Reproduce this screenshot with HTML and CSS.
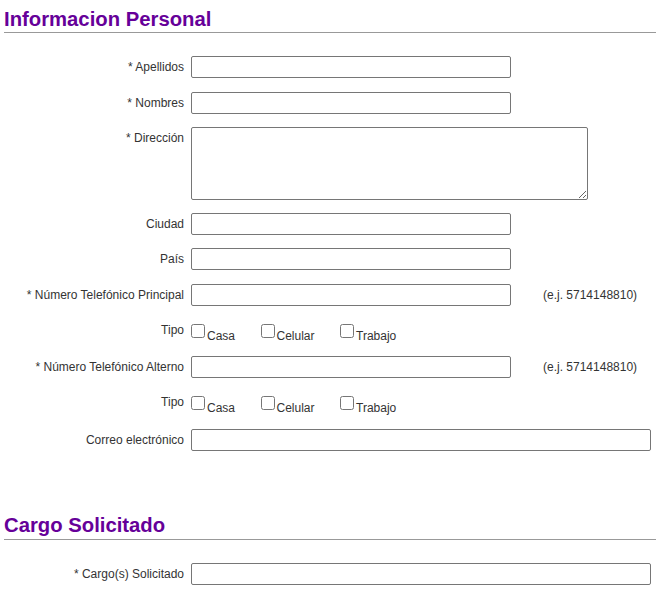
FILE: index.html
```html
<!DOCTYPE html>
<html lang="es">
<head>
<meta charset="utf-8">
<title>Informacion Personal</title>
<link rel="stylesheet" href="styles.css">
</head>
<body>
<div class="page">
  <h2 class="section-title">Informacion Personal</h2>
  <div class="form">
    <div class="row gap-plus">
      <label class="label">* Apellidos</label>
      <input class="field" type="text">
    </div>
    <div class="row">
      <label class="label">* Nombres</label>
      <input class="field" type="text">
    </div>
    <div class="row">
      <label class="label">* Dirección</label>
      <textarea class="area"></textarea>
    </div>
    <div class="row">
      <label class="label">Ciudad</label>
      <input class="field" type="text">
    </div>
    <div class="row gap-plus">
      <label class="label">País</label>
      <input class="field" type="text">
    </div>
    <div class="row">
      <label class="label">* Número Telefónico Principal</label>
      <input class="field" type="text">
      <span class="hint">(e.j. 5714148810)</span>
    </div>
    <div class="row type-row">
      <label class="label">Tipo</label>
      <div class="checks"><input class="check" type="checkbox"><span class="opt">Casa</span><input class="check" type="checkbox"><span class="opt">Celular</span><input class="check" type="checkbox"><span class="opt">Trabajo</span></div>
    </div>
    <div class="row">
      <label class="label">* Número Telefónico Alterno</label>
      <input class="field" type="text">
      <span class="hint">(e.j. 5714148810)</span>
    </div>
    <div class="row type-row tall">
      <label class="label">Tipo</label>
      <div class="checks"><input class="check" type="checkbox"><span class="opt">Casa</span><input class="check" type="checkbox"><span class="opt">Celular</span><input class="check" type="checkbox"><span class="opt">Trabajo</span></div>
    </div>
    <div class="row">
      <label class="label">Correo electrónico</label>
      <input class="field wide" type="text">
    </div>
  </div>

  <h2 class="section-title second">Cargo Solicitado</h2>
  <div class="form">
    <div class="row">
      <label class="label">* Cargo(s) Solicitado</label>
      <input class="field wide" type="text">
    </div>
  </div>
</div>
</body>
</html>
```

FILE: styles.css
```css
html, body {
  margin: 0;
  padding: 0;
  background: #ffffff;
}

body {
  font-family: "Liberation Sans", Arial, sans-serif;
  font-size: 12px;
  color: #333333;
}

.page {
  padding-left: 4px;
}

.section-title {
  margin: 0;
  padding: 7px 0 1px 0;
  font-size: 20.3px;
  line-height: 24px;
  font-weight: bold;
  color: #660099;
  border-bottom: 1px solid #999999;
}

.section-title.second {
  margin-top: 55px;
  padding-bottom: 2px;
}

.form {
  display: flex;
  flex-direction: column;
  row-gap: 13px;
  padding-top: 23px;
}

.row {
  display: flex;
  align-items: flex-start;
}

.row.gap-plus {
  margin-bottom: 1px;
}

.type-row {
  height: 24px;
}

.type-row.tall {
  height: 25px;
}

.label {
  flex: 0 0 180px;
  width: 180px;
  margin-right: 7px;
  padding-top: 3px;
  line-height: 16px;
  text-align: right;
  font-size: 12px;
}

.field {
  box-sizing: border-box;
  width: 320px;
  height: 22px;
  margin: 0;
  padding: 1px 3px;
  border: 1px solid #767676;
  border-radius: 2px;
  font-family: "Liberation Sans", Arial, sans-serif;
  font-size: 12px;
  background: #ffffff;
}

.field.wide {
  width: 460px;
}

.area {
  box-sizing: border-box;
  width: 397px;
  height: 73px;
  margin: 0;
  padding: 2px;
  border: 1px solid #767676;
  border-radius: 2px;
  font-family: "Liberation Sans", Arial, sans-serif;
  font-size: 12px;
  display: block;
}

.hint {
  margin-left: 32px;
  padding-top: 3px;
  line-height: 16px;
  font-size: 12px;
  color: #333333;
}

.checks {
  display: flex;
  align-items: flex-start;
  font-size: 12px;
  line-height: 16px;
}

.check {
  flex: 0 0 auto;
  width: 14px;
  height: 14px;
  margin: 5px 2px 0 0;
}

.opt {
  padding-top: 9px;
  margin-right: 25.5px;
}
```
